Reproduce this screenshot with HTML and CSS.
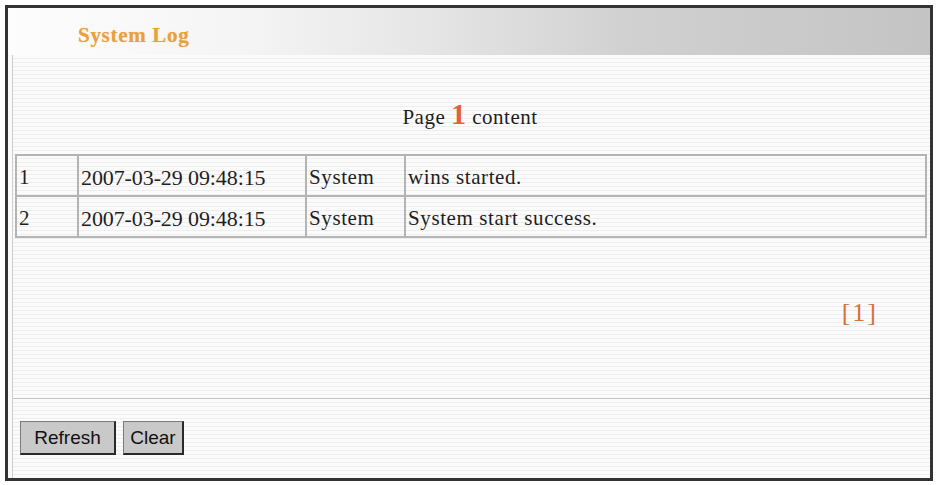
FILE: index.html
```html
<!DOCTYPE html>
<html>
<head>
<meta charset="utf-8">
<title>System Log</title>
<link rel="stylesheet" href="styles.css">
</head>
<body>
<div class="frame">
  <div class="header"><span class="title">System Log</span></div>
  <div class="content">
    <div class="page-info">Page <span class="page-num">1</span> content</div>
    <table class="log">
      <tr>
        <td class="c-id">1</td>
        <td class="c-time">2007-03-29 09:48:15</td>
        <td class="c-src">System</td>
        <td class="c-msg">wins started.</td>
      </tr>
      <tr>
        <td class="c-id">2</td>
        <td class="c-time">2007-03-29 09:48:15</td>
        <td class="c-src">System</td>
        <td class="c-msg">System start success.</td>
      </tr>
    </table>
    <div class="pager">[1]</div>
    <div class="actions">
      <button class="btn btn-refresh">Refresh</button>
      <button class="btn btn-clear">Clear</button>
    </div>
  </div>
</div>
</body>
</html>
```
FILE: styles.css
```css
html, body {
  margin: 0;
  padding: 0;
  background: #ffffff;
}

body {
  font-family: "Liberation Serif", "Times New Roman", serif;
  color: #1e1e1e;
}

.frame {
  margin: 5px 0 0 5px;
  width: 922px;
  height: 470px;
  border: 3px solid #333;
  display: flex;
  flex-direction: column;
  background: #fafafa;
}

.header {
  height: 41px;
  padding: 6px 0 0 70px;
  line-height: 43px;
  background: linear-gradient(to right, #fdfdfd 0%, #f5f5f5 25%, #e6e6e6 45%, #d0d0d0 68%, #c4c4c4 100%);
}

.title {
  font-weight: bold;
  font-size: 21px;
  letter-spacing: 0.7px;
  color: #eba040;
  text-shadow: 0 0 1px #f6c98a;
}

.content {
  flex: 1;
  margin-left: 4px;
  border-left: 1px solid #cfcfcf;
  padding: 0 5px 0 2px;
  background: repeating-linear-gradient(to bottom, #fbfbfb 0px, #fbfbfb 3px, #eeeeee 3px, #eeeeee 4px);
  display: flex;
  flex-direction: column;
}

.page-info {
  margin-top: 44px;
  height: 30px;
  line-height: 30px;
  text-align: center;
  font-size: 21px;
  letter-spacing: 0.5px;
}

.page-num {
  font-size: 30px;
  font-weight: bold;
  color: #e2603a;
}

.log {
  margin-top: 25px;
  width: 912px;
  border-collapse: collapse;
  border: 2px solid #b0b0b0;
  font-size: 21px;
}

.log td {
  border: 2px solid #b4b4b4;
  height: 35px;
  padding: 4px 2px 0 2px;
  vertical-align: middle;
  white-space: nowrap;
}

.c-id { width: 56px; }
.c-time { width: 222px; font-size: 22px; letter-spacing: -0.1px; }
.c-src { width: 93px; letter-spacing: 0.6px; }
.c-msg { letter-spacing: 0.6px; }

.pager {
  margin-top: 60px;
  height: 30px;
  line-height: 30px;
  text-align: right;
  padding-right: 47px;
  font-size: 26px;
  letter-spacing: 2px;
  color: #d8703c;
}

.actions {
  margin: 70px -5px 0 -2px;
  border-top: 1px solid #c4c4c4;
  padding: 22px 0 0 7px;
  display: flex;
  gap: 7px;
}

.btn {
  height: 34px;
  background: #c9c9c9;
  border-style: solid;
  border-width: 1px 2px 2px 1px;
  border-color: #7a7a7a #2a2a2a #2a2a2a #7a7a7a;
  font-family: "Liberation Sans", Arial, sans-serif;
  font-size: 19px;
  color: #111;
  padding: 0;
  margin: 0;
}

.btn-refresh { width: 96px; }
.btn-clear { width: 61px; }
```
